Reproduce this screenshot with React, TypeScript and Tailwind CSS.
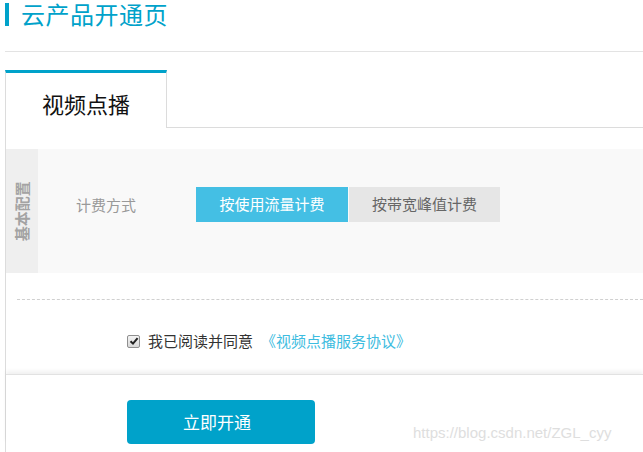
const font = { fontFamily: '"Noto Sans CJK SC", "Noto Sans", sans-serif' }

export default function App() {
  return (
    <div className="relative w-[643px] h-[452px] overflow-hidden bg-white" style={font}>
      {/* header */}
      <div className="ml-[5px] h-[52px] border-b border-[#e3e3e3]">
        <div className="flex items-start">
          <span className="mt-[3px] w-[4px] h-[23px] bg-[#00a2ca]" />
          <h1 className="ml-[12px] text-[24px] leading-[28px] text-[#00a2ca] tracking-[0.5px]">云产品开通页</h1>
        </div>
      </div>

      {/* tabs */}
      <div className="flex mt-[18px] ml-[5px]">
        <div className="w-[162px] h-[58px] border-t-[3px] border-x border-t-[#00a2ca] border-x-[#dcdcdc] flex items-center justify-center">
          <span className="text-[22px] text-[#111] pt-[6px]">视频点播</span>
        </div>
        <div className="flex-1 border-b border-[#dcdcdc]" />
      </div>

      {/* body */}
      <div className="ml-[5px] border-l border-[#dcdcdc] pt-[21px] h-[400px]">
        <div className="flex h-[124px] bg-[#f9f9f9]">
          <div className="w-[32px] bg-[#efefef] flex items-center justify-center">
            <span className="block -rotate-90 whitespace-nowrap text-[15px] font-bold text-[#a3a3a3]">基本配置</span>
          </div>
          <div className="flex items-start pt-[38px] pl-[38px]">
            <span className="text-[15px] leading-[35px] text-[#999]">计费方式</span>
            <div className="flex ml-[60px]">
              <button className="w-[152px] h-[35px] bg-[#44bfe4] text-white text-[15px]">按使用流量计费</button>
              <button className="ml-[1px] w-[151px] h-[35px] bg-[#e6e6e6] text-[#666] text-[15px]">按带宽峰值计费</button>
            </div>
          </div>
        </div>

        <div className="ml-[11px] mt-[26px] border-t border-dashed border-[#d0d0d0]" />

        <div className="flex items-center ml-[121px] mt-[33px] h-[16px]">
          <span className="w-[13px] h-[13px] rounded-[2px] border border-[#8f8f8f] bg-gradient-to-b from-[#f4f4f4] to-[#d8d8d8] flex items-center justify-center">
            <svg width="10" height="10" viewBox="0 0 10 10">
              <path d="M1.5 5.2 L4 7.6 L8.6 2.2" fill="none" stroke="#222" strokeWidth="2" />
            </svg>
          </span>
          <span className="ml-[8px] text-[15px] text-[#333]">我已阅读并同意</span>
          <span className="ml-[8px] text-[15px] text-[#3dbce0]">《视频点播服务协议》</span>
        </div>

        <div className="mt-[25px] border-t border-[#e2e2e2] shadow-[0_-3px_4px_rgba(0,0,0,0.06)]">
          <button className="ml-[121px] mt-[25px] w-[188px] h-[44px] rounded-[4px] bg-[#00a2ca] text-white text-[17px] pr-[8px]">立即开通</button>
        </div>
      </div>

      <span className="absolute left-[413px] top-[422px] text-[15px] text-[#dedede]" style={{ fontFamily: '"Liberation Sans", sans-serif' }}>
        https://blog.csdn.net/ZGL_cyy
      </span>
    </div>
  )
}
